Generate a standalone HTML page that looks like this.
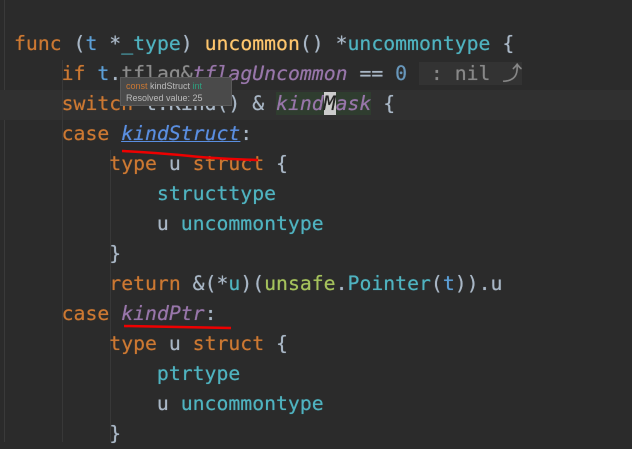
<!DOCTYPE html><html><head><style>
body{margin:0;width:632px;height:442px;background:#2b2b2b;overflow:hidden;position:relative;font-family:"DejaVu Sans Mono","Liberation Mono",monospace;}
.l{position:absolute;left:14px;font-size:19.8px;line-height:30px;height:30px;white-space:pre;color:#a9b7c6;text-shadow:0 0 0.6px currentColor;}
.k{color:#cc7832}.f{color:#ffc66d}.t{color:#4fb3c0}.v{color:#5c9fd6}.c{color:#9876aa;font-style:italic}.n{color:#6897bb}.g{color:#a5c25c}
.gut{position:absolute;left:4px;top:0;width:1px;height:442px;background:#3a3a3a}
.ind{position:absolute;width:1px;background:#383838}
</style></head><body>
<div class="gut"></div>
<div style="position:absolute;left:0;top:90px;width:632px;height:30px;background:#303030"></div>
<div class="ind" style="left:62px;top:60px;height:382px"></div>
<div class="ind" style="left:110px;top:150px;height:292px"></div>
<div class="l" style="top:29px"><span class="k">func</span> (<span class="v">t</span> *<span class="t">_type</span>) <span class="f">uncommon</span>() *<span class="t">uncommontype</span> {</div>
<div class="l" style="top:59px">    <span class="k">if</span> <span class="v">t</span>.<span style="color:#8c8c8c">tflag&amp;</span><span class="c">tflagUncommon</span> == <span class="n">0</span> <span style="background:#333;color:#888"> : nil ⤴</span></div>
<div class="l" style="top:89px">    <span class="k">switch</span> t.Kind() &amp; <span class="c" style="background:#2f3d2f">kind<span style="background:#ccc;color:#222">M</span>ask</span> {</div>
<div class="l" style="top:119px">    <span class="k">case</span> <span class="c" style="color:#5a8ee0;text-decoration:underline">kindStruct</span>:</div>
<div class="l" style="top:149px">        <span class="k">type</span> u <span class="k">struct</span> {</div>
<div class="l" style="top:179px">            <span class="t">structtype</span></div>
<div class="l" style="top:209px">            u <span class="t">uncommontype</span></div>
<div class="l" style="top:239px">        }</div>
<div class="l" style="top:269px">        <span class="k">return</span> &amp;(*<span class="t">u</span>)(<span class="g">unsafe</span>.<span class="t">Pointer</span>(<span class="v">t</span>)).u</div>
<div class="l" style="top:299px">    <span class="k">case</span> <span class="c">kindPtr</span>:</div>
<div class="l" style="top:329px">        <span class="k">type</span> u <span class="k">struct</span> {</div>
<div class="l" style="top:359px">            <span class="t">ptrtype</span></div>
<div class="l" style="top:389px">            u <span class="t">uncommontype</span></div>
<div class="l" style="top:419px">        }</div>
<div style="position:absolute;left:120px;top:77px;width:112px;height:29px;background:#4a4a4a;border:1px solid #5a5a5a;font-family:'Liberation Sans',sans-serif;font-size:9px;line-height:12px;padding:2px 5px;box-sizing:border-box;color:#bbb;white-space:nowrap">
<span style="color:#cc7832">const</span> kindStruct <span style="color:#2ea07f">int</span><br>Resolved value: 25</div>
<svg style="position:absolute;left:0;top:0" width="632" height="442"><path d="M122 151 Q160 153 190 156 T258 160" stroke="#e00" stroke-width="2.5" fill="none"/><path d="M124 326 L231 328" stroke="#e00" stroke-width="2.5" fill="none"/></svg>
</body></html>
